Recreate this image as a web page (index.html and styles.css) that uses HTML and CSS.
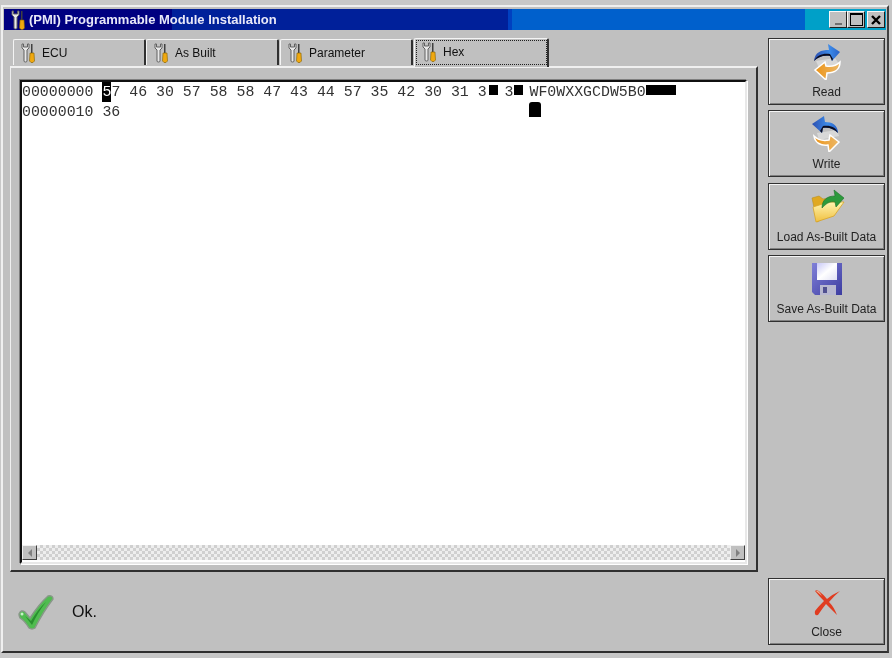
FILE: index.html
```html
<!DOCTYPE html>
<html lang="en">
<head>
<meta charset="utf-8">
<title>(PMI) Programmable Module Installation</title>
<link rel="stylesheet" href="styles.css">
</head>
<body>
<svg class="defs" width="0" height="0" aria-hidden="true">
  <defs>
    <linearGradient id="blue" x1="0" y1="0" x2="1" y2="0"><stop offset="0" stop-color="#2c4fb0"/><stop offset=".6" stop-color="#3c8ae8"/><stop offset="1" stop-color="#2a62c8"/></linearGradient>
    <linearGradient id="orange" x1="0" y1="0" x2="1" y2="0"><stop offset="0" stop-color="#ec9418"/><stop offset="1" stop-color="#ecb868"/></linearGradient>
    <linearGradient id="folder" x1="0" y1="0" x2="0" y2="1"><stop offset="0" stop-color="#fff4b0"/><stop offset="1" stop-color="#f0c040"/></linearGradient>
    <linearGradient id="disk" x1="0" y1="0" x2="1" y2="1"><stop offset="0" stop-color="#8080d8"/><stop offset="1" stop-color="#3c3ca0"/></linearGradient>
    <linearGradient id="label" x1="0" y1="0" x2="1" y2="1"><stop offset="0" stop-color="#c8c8f8"/><stop offset=".5" stop-color="#ffffff"/><stop offset="1" stop-color="#e0e0f4"/></linearGradient>
    <symbol id="tool" viewBox="0 0 16 20">
      <path d="M2 1 L2 5 L4 7 L4 18 Q4 19 5.500 19 Q7 19 7 18 L7 7 L9 5 L9 1 L7.500 1 L7.500 4 L3.500 4 L3.500 1 Z" fill="#e8e8e8" stroke="#606060" stroke-width="1"/>
      <path d="M11 1 L12.500 1 L12.500 10 L11 10 Z" fill="#404040"/>
      <path d="M10 10 L14 10 L14.500 18 L13 19.500 L11 19.500 L9.500 18 Z" fill="#f0a810" stroke="#806000" stroke-width=".6"/>
    </symbol>
  </defs>
</svg>
<div class="window">
  <header class="titlebar">
    <svg class="title-icon" width="16" height="20"><use href="#tool"/></svg>
    <span class="title-text">(PMI) Programmable Module Installation</span>
    <div class="controls">
      <span class="ctl ctl-min"></span>
      <span class="ctl ctl-max"></span>
      <span class="ctl ctl-close">
        <svg width="12" height="12" viewBox="0 0 12 12"><path d="M2 2 L10 10 M10 2 L2 10" stroke="#000" stroke-width="2.400" fill="none"/></svg>
      </span>
    </div>
  </header>

  <div class="client">
    <section class="main">
      <nav class="tabs">
        <div class="tab"><svg width="16" height="20"><use href="#tool"/></svg><span>ECU</span></div>
        <div class="tab"><svg width="16" height="20"><use href="#tool"/></svg><span>As Built</span></div>
        <div class="tab"><svg width="16" height="20"><use href="#tool"/></svg><span>Parameter</span></div>
        <div class="tab tab-active"><svg width="16" height="20"><use href="#tool"/></svg><span>Hex</span></div>
      </nav>
      <div class="panel">
        <div class="field">
          <div class="hex">
            <div class="hex-row">00000000 <span class="sel">5</span>7 46 30 57 58 58 47 43 44 57 35 42 30 31 3<i class="redact redact-a"></i> 3<i class="redact"></i> <span class="ascii">WF0WXXGCDW5B0</span><i class="redact redact-wide"></i></div>
            <div class="hex-row">00000010 36                                              <i class="redact-tall"></i></div>
          </div>
          <div class="scrollbar">
            <span class="sb-btn"><i class="arrow-left"></i></span>
            <span class="sb-track"></span>
            <span class="sb-btn"><i class="arrow-right"></i></span>
          </div>
        </div>
      </div>
    </section>

    <aside class="side">
      <button class="btn" type="button">
        <svg class="btn-icon" width="36" height="36" viewBox="0 0 36 36">
          <path d="M7 17 L26 14 L30 20 L10 24 Z" fill="#d8d8d8"/>
          <path d="M31 18 C31 26 25 29 18 29 L17 36 L6 26 L16 18 L17 22 C23 23 28 21 31 18 Z" fill="url(#orange)" stroke="#fff" stroke-width="1.500"/>
          <path d="M5 17 C6 8 12 6 20 6 L19 0 L31 8 L23 17 L21 12 C14 11 9 13 5 17 Z" fill="url(#blue)"/>
          <path d="M5 17 C9 13 14 11 21 12 L23 17 L24 15 L21 10 C14 9 8 11 5 17 Z" fill="#0c0c20"/>
        </svg>
        <span class="btn-label">Read</span>
      </button>
      <button class="btn" type="button">
        <svg class="btn-icon" width="36" height="36" viewBox="0 0 36 36">
          <path d="M8 17 L28 14 L30 20 L10 24 Z" fill="#d8d8d8"/>
          <path d="M5 20 C6 27 12 30 19 29 L20 36 L30 26 L21 19 L20 24 C15 25 9 24 5 20 Z" fill="url(#orange)" stroke="#fff" stroke-width="1.500"/>
          <path d="M29 17 C29 9 23 6 16 6 L15 0 L3 8 L13 17 L14 12 C20 11 25 13 29 17 Z" fill="url(#blue)"/>
          <path d="M29 17 C25 13 20 11 14 12 L13 17 L11 15 L14 10 C21 9 27 11 29 17 Z" fill="#0c0c20"/>
        </svg>
        <span class="btn-label">Write</span>
      </button>
      <button class="btn" type="button">
        <svg class="btn-icon" width="36" height="36" viewBox="0 0 36 36">
          <path d="M3 9 L10 7 L14 10 L27 8 L28 22 L8 33 Z" fill="#e0a820" stroke="#b89020" stroke-width=".6"/>
          <path d="M4 18 L20 13 L35 13 L25 27 L7 33 Z" fill="url(#folder)" stroke="#d8a428" stroke-width=".8"/>
          <path d="M13 19 C13 10 19 7 26 7 L25 1 L35 9 L27 18 L26 13 C20 12 17 15 13 19 Z" fill="#2c9a3c" stroke="#1c7028" stroke-width=".6"/>
        </svg>
        <span class="btn-label">Load As-Built Data</span>
      </button>
      <button class="btn" type="button">
        <svg class="btn-icon" width="36" height="36" viewBox="0 0 36 36">
          <path d="M3 2 L33 2 L33 34 L6 34 L3 31 Z" fill="url(#disk)"/>
          <path d="M8 2 L28 2 L28 19 L8 19 Z" fill="url(#label)"/>
          <path d="M11 24 L27 24 L27 34 L11 34 Z" fill="#b8b8d0"/>
          <path d="M14 26 L18 26 L18 32 L14 32 Z" fill="#505090"/>
        </svg>
        <span class="btn-label">Save As-Built Data</span>
      </button>
    </aside>

    <footer class="status">
      <svg width="36" height="36" viewBox="0 0 36 36">
        <path d="M1 20 Q3 15 7 18 L12 24 Q21 10 30 2 Q35 1 35 5 Q25 18 17 34 Q14 36 11 34 Q7 27 2 24 Q1 22 1 20 Z" fill="#50bc50" stroke="#889888" stroke-width="1.400"/>
        <path d="M7 22 L14 31 Q20 18 28 8 Q20 15 13 27 Z" fill="#2a9030"/>
        <circle cx="4" cy="20" r="1.500" fill="#c8f0c8"/>
      </svg>
      <span class="status-text">Ok.</span>
    </footer>
    <button class="btn btn-close" type="button">
      <svg class="btn-icon" width="36" height="36" viewBox="0 0 36 36">
        <path d="M6 7 Q8 5 11 8 Q15 11 18 15 Q24 10 31 7 Q25 12 20 18 Q25 23 28 31 Q23 26 17 20 Q13 25 9 31 Q5 32 6 27 Q9 23 15 17 Q10 12 6 7 Z" fill="#e03c20"/>
        <path d="M7 7 Q9 6 11 9 L13 12 Z" fill="#f0b090"/>
      </svg>
      <span class="btn-label">Close</span>
    </button>
  </div>
</div>
</body>
</html>
```

FILE: styles.css
```css
* { box-sizing: border-box; }

html, body { margin: 0; padding: 0; }

body {
  width: 892px;
  height: 658px;
  background: #c8c8c8;
  overflow: hidden;
  font-family: "Liberation Sans", Arial, sans-serif;
  font-size: 12px;
  color: #111;
  padding: 5px 3px 5px 1px;
}

.defs { position: absolute; }

.window {
  height: 648px;
  background: #c0c0c0;
  border: 2px solid;
  border-color: #f0f0f0 #404040 #303030 #f0f0f0;
  padding: 2px 1px 0 1px;
  filter: blur(.4px);
}

.titlebar {
  height: 21px;
  display: flex;
  align-items: center;
  padding-left: 6px;
  color: #e8e8f8;
  background: linear-gradient(90deg,
    #000080 0, #000080 168px,
    #00209a 168px, #00209a 504px,
    #0040c0 504px, #0040c0 508px,
    #0060cc 508px, #0060cc 801px,
    #00a0c8 801px);
}

.title-icon { flex: none; }

.title-text {
  margin-left: 3px;
  font-size: 13px;
  font-weight: bold;
  white-space: nowrap;
}

.controls {
  margin-left: auto;
  display: flex;
  padding-right: 1px;
}

.ctl {
  width: 18px;
  height: 17px;
  background: #c0c0c0;
  border: 1px solid;
  border-color: #f8f8f8 #202020 #202020 #f8f8f8;
  display: flex;
  align-items: center;
  justify-content: center;
}

.ctl-min::after {
  content: "";
  width: 7px;
  height: 2px;
  background: #707070;
  margin-top: 8px;
}

.ctl-max::after {
  content: "";
  width: 11px;
  height: 10px;
  border: 1px solid #000;
  border-top-width: 2px;
}

.ctl-close { margin-left: 2px; }

.client {
  display: grid;
  grid-template-columns: 748px 117px;
  grid-template-rows: 534px 67px;
  column-gap: 10px;
  row-gap: 6px;
  padding: 8px 0 0 6px;
}

.main {
  display: flex;
  flex-direction: column;
  padding-top: 2px;
}

.tabs {
  height: 26px;
  display: flex;
  padding-left: 3px;
  align-items: flex-end;
  position: relative;
  z-index: 1;
}

.tab {
  width: 133px;
  height: 26px;
  display: flex;
  align-items: center;
  gap: 6px;
  padding-left: 6px;
  background: #c0c0c0;
  border-top: 1px solid #f4f4f4;
  border-left: 1px solid #f4f4f4;
  border-right: 2px solid #303030;
  border-radius: 2px 2px 0 0;
  margin-bottom: 1px;
}

.tab:nth-child(3) { margin-left: 1px; }

.tab-active {
  width: 135px;
  height: 29px;
  margin-left: 1px;
  margin-bottom: -1px;
  padding: 0 0 3px 6px;
  gap: 6px;
  outline: 1px dotted #202020;
  outline-offset: -3px;
}

.panel {
  height: 506px;
  padding: 12px 9px 6px 9px;
  border: 1px solid;
  border-width: 2px 2px 2px 1px;
  border-color: #f0f0f0 #303030 #303030 #f0f0f0;
  background: #c0c0c0;
}

.field {
  height: 100%;
  background: #fff;
  border: 2px solid;
  border-color: #101010 #e8e8e8 #e8e8e8 #101010;
  display: flex;
  flex-direction: column;
  box-shadow: -1px -1px 0 #808080, 1px 1px 0 #fff;
}

.hex {
  flex: 1;
  font-family: "Liberation Mono", "Courier New", monospace;
  font-size: 14.9px;
  line-height: 20px;
  color: #333;
}

.hex-row {
  white-space: pre;
  height: 20px;
}

.sel {
  display: inline-block;
  background: #000;
  color: #fff;
  line-height: 20px;
  height: 20px;
}

.ascii { margin-left: -2px; }

.redact {
  display: inline-block;
  width: 9px;
  height: 10px;
  background: #000;
  vertical-align: 1px;
}

.redact-a {
  margin-left: 2px;
  margin-right: -2px;
}

.redact-wide { width: 30px; }

.redact-tall {
  display: inline-block;
  height: 15px;
  width: 12px;
  margin-left: -2px;
  background: #000;
  border-radius: 3px 3px 0 0;
  vertical-align: -1px;
}

.scrollbar {
  height: 15px;
  margin-bottom: 2px;
  display: flex;
}

.sb-btn {
  width: 15px;
  background: #c0c0c0;
  border: 1px solid;
  border-color: #f0f0f0 #404040 #404040 #f0f0f0;
  display: flex;
  align-items: center;
  justify-content: center;
  flex: none;
}

.arrow-left, .arrow-right {
  width: 0;
  height: 0;
  border-top: 4px solid transparent;
  border-bottom: 4px solid transparent;
}

.arrow-left { border-right: 4px solid #808080; }
.arrow-right { border-left: 4px solid #808080; }

.sb-track {
  flex: 1;
  background-color: #eeeeee;
  background-image: conic-gradient(#d0d0d0 25%, transparent 0 50%, #d0d0d0 0 75%, transparent 0);
  background-size: 6px 6px;
}

.side {
  display: flex;
  flex-direction: column;
  gap: 5.33px;
}

.btn {
  width: 117px;
  height: 67px;
  padding: 5px 0 0;
  margin: 0;
  display: flex;
  flex-direction: column;
  align-items: center;
  background: #c0c0c0;
  border: 1px solid #303030;
  box-shadow: inset 1px 1px 0 #f4f4f4, inset -1px -1px 0 #808080;
  font-family: "Liberation Sans", Arial, sans-serif;
  font-size: 12px;
  color: #222;
}

.btn-icon { flex: none; }

.btn-label {
  margin-top: 5px;
  line-height: 14px;
  white-space: nowrap;
}

.status {
  display: flex;
  align-items: center;
  padding-left: 8px;
  gap: 18px;
}

.status-text {
  font-size: 16px;
  color: #111;
}
```
